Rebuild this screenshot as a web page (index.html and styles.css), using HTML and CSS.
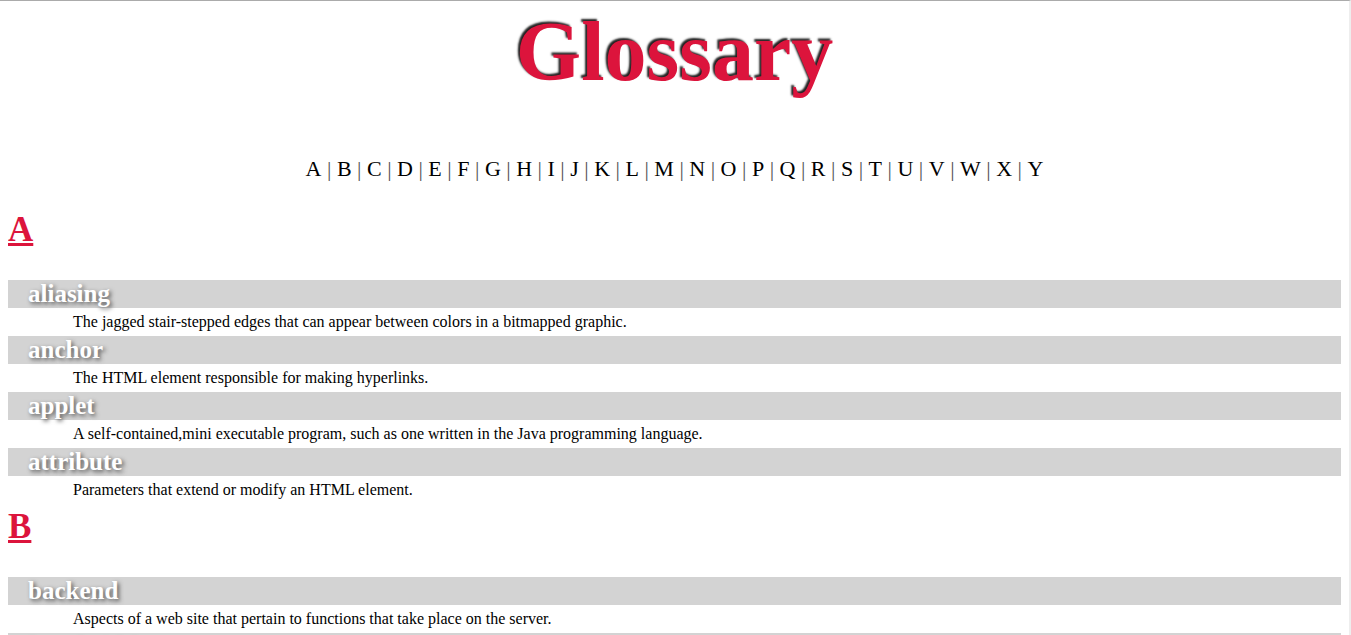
FILE: index.html
```html
<!DOCTYPE html>
<html>
<head>
<meta charset="utf-8">
<title>Glossary</title>
<link rel="stylesheet" href="styles.css">
</head>
<body>
<h1 class="title">Glossary</h1>
<nav class="letters">
<a href="#A">A</a><span class="sep">|</span><a href="#B">B</a><span class="sep">|</span><a href="#C">C</a><span class="sep">|</span><a href="#D">D</a><span class="sep">|</span><a href="#E">E</a><span class="sep">|</span><a href="#F">F</a><span class="sep">|</span><a href="#G">G</a><span class="sep">|</span><a href="#H">H</a><span class="sep">|</span><a href="#I">I</a><span class="sep">|</span><a href="#J">J</a><span class="sep">|</span><a href="#K">K</a><span class="sep">|</span><a href="#L">L</a><span class="sep">|</span><a href="#M">M</a><span class="sep">|</span><a href="#N">N</a><span class="sep">|</span><a href="#O">O</a><span class="sep">|</span><a href="#P">P</a><span class="sep">|</span><a href="#Q">Q</a><span class="sep">|</span><a href="#R">R</a><span class="sep">|</span><a href="#S">S</a><span class="sep">|</span><a href="#T">T</a><span class="sep">|</span><a href="#U">U</a><span class="sep">|</span><a href="#V">V</a><span class="sep">|</span><a href="#W">W</a><span class="sep">|</span><a href="#X">X</a><span class="sep">|</span><a href="#Y">Y</a>
</nav>

<section class="group">
<h2 class="group-letter"><a id="A" href="#A">A</a></h2>
<dl class="terms">
<dt class="term">aliasing</dt>
<dd class="def">The jagged stair-stepped edges that can appear between colors in a bitmapped graphic.</dd>
<dt class="term">anchor</dt>
<dd class="def">The HTML element responsible for making hyperlinks.</dd>
<dt class="term">applet</dt>
<dd class="def">A self-contained,mini executable program, such as one written in the Java programming language.</dd>
<dt class="term">attribute</dt>
<dd class="def">Parameters that extend or modify an HTML element.</dd>
</dl>
</section>

<section class="group">
<h2 class="group-letter"><a id="B" href="#B">B</a></h2>
<dl class="terms">
<dt class="term">backend</dt>
<dd class="def">Aspects of a web site that pertain to functions that take place on the server.</dd>
<dt class="term">bandwidth</dt>
<dd class="def">The amount of data that can be transmitted over a network connection in a given time.</dd>
<dt class="term">browser</dt>
<dd class="def">Software that displays web pages.</dd>
</dl>
</section>
</body>
</html>
```
FILE: styles.css
```css
html {
  margin: 0;
  padding: 0;
  border-top: 1px solid #ababab;
  border-right: 2px solid #eeeeee;
  background: #ffffff;
}

body {
  margin: 0 8px;
  font-family: "Liberation Serif", "Times New Roman", serif;
  color: #000000;
}

.title {
  margin: 0;
  padding-top: 3px;
  height: 99px;
  box-sizing: border-box;
  font-size: 84px;
  line-height: 96px;
  font-weight: bold;
  text-align: center;
  color: #dc143c;
  text-shadow: -2px -2px 2px #222222;
}

.letters {
  margin: 56px 0 25px;
  text-align: center;
  font-size: 22px;
  line-height: 26px;
}

.letters a {
  color: #000000;
  text-decoration: none;
}

.sep {
  color: #555555;
  margin: 0 5.5px;
}

.group-letter {
  margin: 0;
  padding-top: 3px;
  height: 73px;
  box-sizing: border-box;
  font-size: 35px;
  line-height: 40px;
  font-weight: bold;
}

.group-letter a {
  color: #dc143c;
  text-decoration: underline;
}

.terms {
  margin: 0;
  padding: 0;
}

.term {
  background: #d3d3d3;
  color: #ffffff;
  font-size: 25px;
  line-height: 28px;
  height: 28px;
  font-weight: bold;
  padding-left: 20px;
  text-shadow: 2px 2px 4px #555555;
}

.def {
  margin: 0;
  padding-left: 65px;
  font-size: 16px;
  line-height: 28px;
  height: 28px;
}
```
